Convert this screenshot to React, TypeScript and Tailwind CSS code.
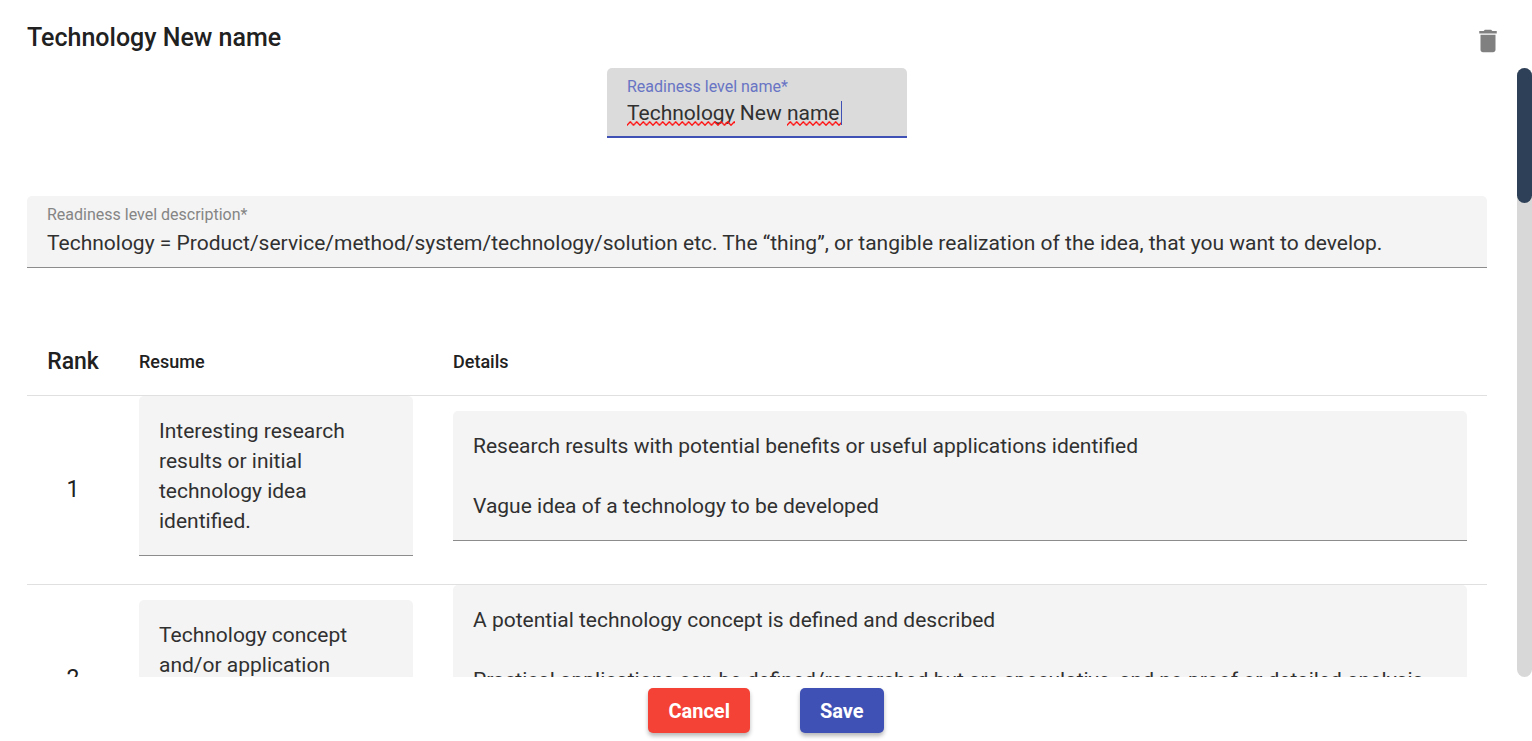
import { useState } from "react";
import type { TextareaHTMLAttributes, UIEvent } from "react";
import { MdDelete } from "react-icons/md";

type Level = { rank: number; resume: string; resumeRows: number; details: string; detailRows: number };

const levels: Level[] = [
  {
    rank: 1,
    resume: "Interesting research results or initial technology idea identified.",
    resumeRows: 4,
    details:
      "Research results with potential benefits or useful applications identified\n\nVague idea of a technology to be developed",
    detailRows: 3,
  },
  {
    rank: 2,
    resume: "Technology concept and/or application",
    resumeRows: 3,
    details:
      "A potential technology concept is defined and described\n\nPractical applications can be defined/researched but are speculative, and no proof or detailed analysis",
    detailRows: 4,
  },
];

function FilledArea(props: TextareaHTMLAttributes<HTMLTextAreaElement>) {
  return (
    <textarea
      {...props}
      className="block w-full resize-none overflow-hidden rounded-t-[5px] border-b border-[#8c8c8c] bg-[#f4f4f4] px-5 pt-5 pb-[19px] text-[21px] leading-[30px] text-[#303030] outline-none"
    />
  );
}

function Squiggle({ className, id }: { className: string; id: string }) {
  return (
    <svg aria-hidden="true" className={className}>
      <defs>
        <pattern id={id} width="6.5" height="5" patternUnits="userSpaceOnUse">
          <path d="M-3.25 0.8 0 4.2 3.25 0.8 6.5 4.2 9.75 0.8" fill="none" stroke="#ff0f0f" strokeWidth="1.4" />
        </pattern>
      </defs>
      <rect width="100%" height="100%" fill={`url(#${id})`} />
    </svg>
  );
}

export default function App() {
  const [name, setName] = useState("Technology New name");
  const [scroll, setScroll] = useState(0);

  const onScroll = (e: UIEvent<HTMLDivElement>) => {
    const el = e.currentTarget;
    const range = el.scrollHeight - el.clientHeight;
    setScroll(range > 0 ? el.scrollTop / range : 0);
  };

  return (
    <main className="flex h-screen flex-col bg-white font-['Roboto',sans-serif] text-[#212121]">
      <header className="flex h-[68px] shrink-0 items-start justify-between pt-[22px] pr-[29px] pl-[27px]">
        <h1 className="text-[25px] leading-[32px] font-medium">{name}</h1>
        <button type="button" aria-label="Delete readiness level" className="mt-1 text-[#808080]">
          <MdDelete size={30} />
        </button>
      </header>

      <div className="flex min-h-0 flex-1">
        <div
          onScroll={onScroll}
          className="min-w-0 flex-1 overflow-y-auto pr-[30px] pl-[27px] [scrollbar-width:none]"
        >
          <div className="relative mx-auto h-[70px] w-[300px]">
            <label htmlFor="level-name" className="absolute top-[9px] left-5 text-[16px] leading-[20px] text-[#6874c4]">
              Readiness level name*
            </label>
            <input
              id="level-name"
              type="text"
              value={name}
              onChange={(e) => setName(e.target.value)}
              className="block h-full w-full rounded-t-[5px] border-b-2 border-[#3f51b5] bg-[#dbdbdb] px-5 pt-[30px] pb-2 text-[21px] leading-[30px] text-[#303030] outline-none"
            />
            <Squiggle id="squiggle-a" className="absolute top-[53px] left-5 h-[5px] w-[108px]" />
            <Squiggle id="squiggle-b" className="absolute top-[53px] left-[180px] h-[5px] w-[54px]" />
            <span className="absolute top-[33px] left-[234px] h-6 w-px bg-[#3f51b5]" />
          </div>

          <div className="relative mt-[58px]">
            <label
              htmlFor="level-description"
              className="absolute top-[9px] left-5 text-[16px] leading-[20px] text-[#858585]"
            >
              Readiness level description*
            </label>
            <textarea
              id="level-description"
              rows={1}
              defaultValue="Technology = Product/service/method/system/technology/solution etc. The “thing”, or tangible realization of the idea, that you want to develop."
              className="block w-full resize-none overflow-hidden rounded-t-[5px] border-b border-[#8c8c8c] bg-[#f4f4f4] px-5 pt-8 pb-[9px] text-[21px] leading-[30px] text-[#303030] outline-none"
            />
          </div>

          <table className="mt-[57px] w-full table-fixed border-collapse">
            <thead>
              <tr className="h-[70px] border-b border-[#e0e0e0]">
                <th scope="col" className="w-[92px] pt-1 text-center text-[23px] leading-[30px] font-medium">
                  Rank
                </th>
                <th scope="col" className="w-[314px] px-5 pt-1 text-left text-[18px] leading-[30px] font-medium">
                  Resume
                </th>
                <th scope="col" className="px-5 pt-1 text-left text-[18px] leading-[30px] font-medium">
                  Details
                </th>
              </tr>
            </thead>
            <tbody>
              {levels.map((level) => (
                <tr key={level.rank} className="border-b border-[#e0e0e0]">
                  <td className="text-center align-middle text-[23px] leading-[30px]">{level.rank}</td>
                  <td className="px-5 pb-7 align-middle">
                    <FilledArea
                      aria-label={`Resume for rank ${level.rank}`}
                      rows={level.resumeRows}
                      defaultValue={level.resume}
                    />
                  </td>
                  <td className="px-5 pb-7 align-middle">
                    <FilledArea
                      aria-label={`Details for rank ${level.rank}`}
                      rows={level.detailRows}
                      defaultValue={level.details}
                    />
                  </td>
                </tr>
              ))}
            </tbody>
          </table>
        </div>

        <div aria-hidden="true" className="flex w-[15px] shrink-0 flex-col rounded-full bg-[#d8d8d8]">
          <div style={{ flexGrow: scroll }} />
          <div className="h-[135px] shrink-0 rounded-full bg-[#2e4057]" />
          <div style={{ flexGrow: 1 - scroll }} />
        </div>
      </div>

      <footer className="flex h-16 shrink-0 items-start justify-center gap-[50px] pt-[11px]">
        <button
          type="button"
          className="h-[45px] rounded-[5px] bg-[#f44336] px-5 text-[20px] font-bold text-white shadow-[0_3px_4px_rgba(0,0,0,0.28)]"
        >
          Cancel
        </button>
        <button
          type="button"
          className="h-[45px] rounded-[5px] bg-[#3f51b5] px-5 text-[20px] font-bold text-white shadow-[0_3px_4px_rgba(0,0,0,0.28)]"
        >
          Save
        </button>
      </footer>
    </main>
  );
}
